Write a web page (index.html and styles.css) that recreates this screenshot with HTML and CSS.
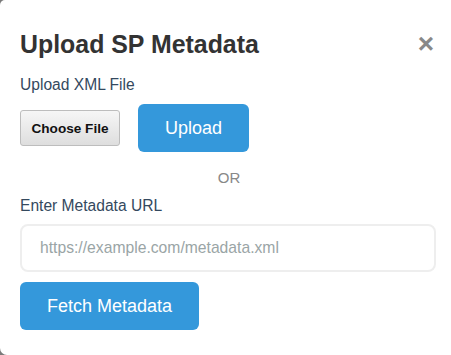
FILE: index.html
```html
<!DOCTYPE html>
<html>
<head>
<meta charset="utf-8">
<link rel="stylesheet" href="styles.css">
</head>
<body>
<div class="modal">
  <div class="header">
    <h2 class="title">Upload SP Metadata</h2>
    <span class="close">&times;</span>
  </div>
  <div class="label label-file">Upload XML File</div>
  <div class="upload-row">
    <button class="file-btn">Choose File</button>
    <button class="btn upload-btn">Upload</button>
  </div>
  <div class="or">OR</div>
  <div class="label label-url">Enter Metadata URL</div>
  <input class="url" type="text" placeholder="https://example.com/metadata.xml">
  <button class="btn fetch-btn">Fetch Metadata</button>
</div>
</body>
</html>
```
FILE: styles.css
```css
html, body { margin: 0; padding: 0; }
body {
  background: #7a7a7a;
  width: 451px;
  height: 355px;
  overflow: hidden;
  font-family: "Liberation Sans", Arial, sans-serif;
}
.modal {
  background: #fff;
  width: 451px;
  height: 355px;
  box-sizing: border-box;
  padding: 28px 17px 0 20px;
  border-radius: 5px 0 0 7px;
}
.header {
  display: flex;
  justify-content: space-between;
  align-items: center;
  height: 32px;
}
.title {
  margin: 0;
  font-size: 24.9px;
  font-weight: bold;
  color: #333;
}
.close {
  font-size: 28px;
  font-weight: bold;
  color: #888;
  line-height: 1;
}
.label {
  font-size: 15.6px;
  color: #34495e;
}
.label-file { margin-top: 16px; }
.label-url { margin-top: 11px; }
.upload-row {
  display: flex;
  align-items: center;
  gap: 18px;
  margin-top: 10px;
}
.file-btn {
  width: 100px;
  height: 36px;
  font-family: "Liberation Sans", Arial, sans-serif;
  font-size: 13.6px;
  font-weight: bold;
  color: #111;
  background: linear-gradient(#f6f6f6, #dedede);
  border: 1px solid #bdbdbd;
  border-radius: 3px;
  padding: 0;
}
.btn {
  background: #3498db;
  color: #fff;
  border: none;
  border-radius: 6px;
  font-family: "Liberation Sans", Arial, sans-serif;
  font-size: 18px;
  padding: 0;
  height: 48px;
}
.upload-btn { width: 111px; }
.or {
  text-align: center;
  color: #888;
  font-size: 15px;
  margin-top: 17px;
  padding-left: 4px;
}
.url {
  display: block;
  margin-top: 9px;
  width: 416px;
  height: 48px;
  box-sizing: border-box;
  border: 2px solid #eeeeee;
  border-radius: 8px;
  padding: 0 18px;
  font-family: "Liberation Sans", Arial, sans-serif;
  font-size: 15.7px;
  outline: none;
}
.url::placeholder { color: #9aa5a6; }
.fetch-btn {
  display: block;
  margin-top: 10px;
  width: 179px;
}
```
